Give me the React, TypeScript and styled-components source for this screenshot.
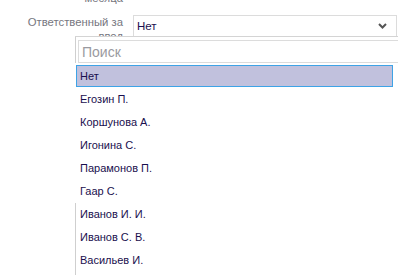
import React from "react";
import styled, { createGlobalStyle } from "styled-components";

const Global = createGlobalStyle`
  html, body { margin: 0; padding: 0; background: #fff; overflow: hidden; }
  body { font-family: "Liberation Sans", Arial, sans-serif; font-size: 11px; }
`;

const Page = styled.div`
  position: relative;
  width: 398px;
  height: 275px;
  overflow: hidden;
`;

const Form = styled.div`
  display: flex;
  flex-direction: column;
  gap: 10px;
  margin-top: -9px;
`;

const Row = styled.div`
  display: grid;
  grid-template-columns: 123px 264px;
  column-gap: 10px;
  align-items: start;
`;

const Label = styled.div`
  text-align: right;
  color: #767680;
  font-size: 11.3px;
  line-height: 14px;
  padding-left: 24px;
`;

const Select = styled.div`
  height: 20px;
  border: 1px solid #dcdcdc;
  display: flex;
  align-items: center;
  justify-content: space-between;
  padding: 0 9px 0 3px;
  color: #1a0f4e;
  font-size: 11.5px;
`;

const Panel = styled.div`
  position: absolute;
  left: 75px;
  top: 36px;
  width: 320px;
  height: 260px;
  background: #fff;
  border-top: 1px solid #d4d4d4;
  border-right: 1px solid #cfcfcf;
  padding: 3px 2px 0 4px;
  display: flex;
  flex-direction: column;
  gap: 2px;
  &::before,
  &::after {
    content: "";
    position: absolute;
    left: 0;
    width: 1px;
    background: #cfcfcf;
  }
  &::before { top: 0; height: 26px; }
  &::after { top: 166px; bottom: 0; }
`;

const Search = styled.div`
  height: 21px;
  margin-left: -1px;
  border: 1px solid #dcdcdc;
  display: flex;
  align-items: center;
  padding-left: 3px;
  color: #9a9aa0;
  font-size: 14px;
`;

const List = styled.ul`
  list-style: none;
  margin: 0 0 0 -3px;
  padding: 0;
  width: 317px;
`;

const Item = styled.li<{ $active?: boolean }>`
  height: ${(p) => (p.$active ? "20px" : "23px")};
  display: flex;
  align-items: center;
  padding-left: ${(p) => (p.$active ? "3px" : "4px")};
  border: ${(p) => (p.$active ? "1px solid #3ea3e6" : "none")};
  background: ${(p) => (p.$active ? "#c1c1dd" : "transparent")};
  color: #1a0f4e;
  font-size: 11px;
`;

const items = [
  "Егозин П.",
  "Коршунова А.",
  "Игонина С.",
  "Парамонов П.",
  "Гаар С.",
  "Иванов И. И.",
  "Иванов С. В.",
  "Васильев И.",
];

export default function App() {
  return (
    <>
      <Global />
      <Page>
        <Form>
          <Row>
            <Label>месяца</Label>
            <div />
          </Row>
          <Row>
            <Label>Ответственный за ввод</Label>
            <Select>
              <span>Нет</span>
              <svg width="9" height="6" viewBox="0 0 9 6">
                <path d="M1 1 L4.5 4.5 L8 1" fill="none" stroke="#555" strokeWidth="2" />
              </svg>
            </Select>
          </Row>
        </Form>
        <Panel>
          <Search>Поиск</Search>
          <List>
            <Item $active>Нет</Item>
            {items.map((n) => (
              <Item key={n}>{n}</Item>
            ))}
          </List>
        </Panel>
      </Page>
    </>
  );
}
